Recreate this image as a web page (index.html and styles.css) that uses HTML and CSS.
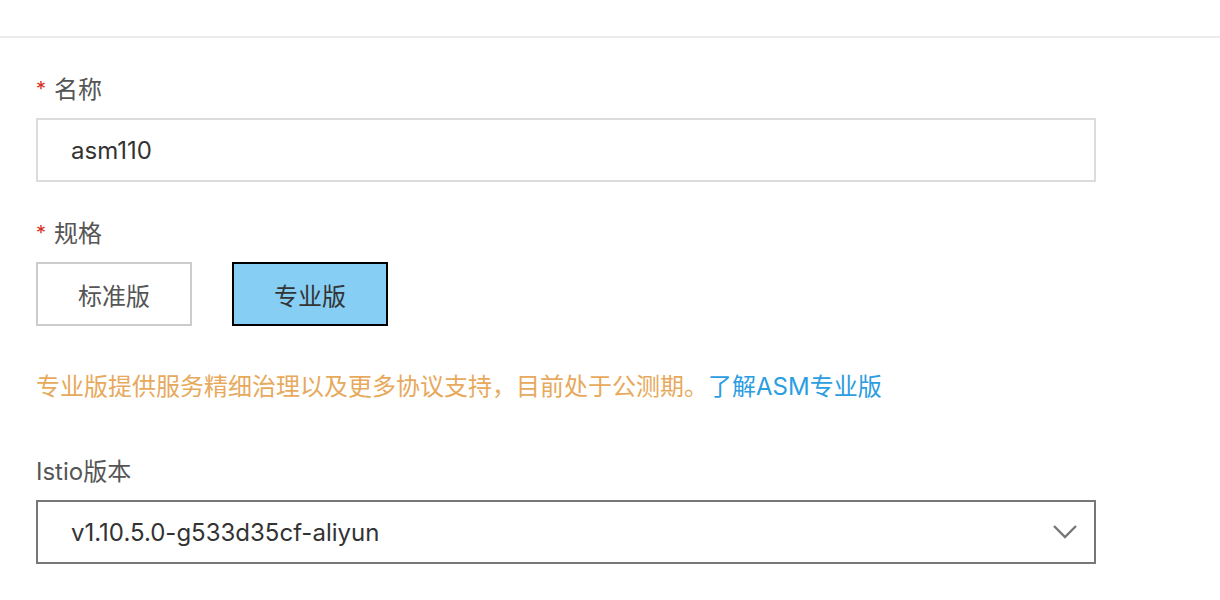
FILE: index.html
```html
<!DOCTYPE html>
<html lang="zh">
<head>
<meta charset="utf-8">
<link rel="stylesheet" href="styles.css">
</head>
<body>
<div class="topbar"></div>
<form class="form">
  <div class="field">
    <label class="label"><span class="req">*</span>名称</label>
    <div class="input">asm110</div>
  </div>
  <div class="field">
    <label class="label"><span class="req">*</span>规格</label>
    <div class="options">
      <div class="opt">标准版</div>
      <div class="opt active">专业版</div>
    </div>
  </div>
  <p class="note">专业版提供服务精细治理以及更多协议支持，目前处于公测期。<a class="link">了解ASM专业版</a></p>
  <div class="field">
    <label class="label">Istio版本</label>
    <div class="select">
      <span>v1.10.5.0-g533d35cf-aliyun</span>
      <svg class="chev" width="26" height="16" viewBox="0 0 26 16"><path d="M2 2 L13 13 L24 2" fill="none" stroke="#777" stroke-width="2.4"/></svg>
    </div>
  </div>
</form>
</body>
</html>
```

FILE: styles.css
```css
html, body {
  margin: 0;
  background: #fff;
}
body {
  font-family: "Inter", "Noto Sans CJK SC", sans-serif;
  font-size: 24px;
  color: #555;
}
.topbar {
  height: 36px;
  border-bottom: 2px solid #ececec;
}
.form {
  padding: 36px 0 0 36px;
  width: 1060px;
}
.field {
  display: flex;
  flex-direction: column;
  gap: 12px;
  margin-bottom: 36px;
}
.label {
  line-height: 32px;
  height: 32px;
  color: #555;
  display: flex;
  align-items: center;
}
.req {
  color: #d93026;
  font-size: 20px;
  margin-right: 8px;
  position: relative;
  top: -1px;
}
.input, .select {
  box-sizing: border-box;
  height: 64px;
  border: 2px solid #dcdcdc;
  padding: 0 16px 0 33px;
  display: flex;
  align-items: center;
  color: #333;
}
.select {
  border-color: #777;
  justify-content: space-between;
}
.options {
  display: flex;
  gap: 40px;
}
.opt {
  box-sizing: border-box;
  width: 156px;
  height: 64px;
  border: 2px solid #ccc;
  display: flex;
  align-items: center;
  justify-content: center;
  color: #555;
}
.opt.active {
  background: #87cef5;
  border-color: #000;
  color: #333;
}
.note {
  margin: 45px 0 53px;
  line-height: 32px;
  color: #e7a95c;
}
.link {
  color: #2b9de0;
}
```
